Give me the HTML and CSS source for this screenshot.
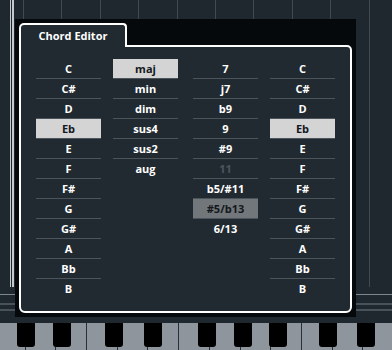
FILE: index.html
```html
<!DOCTYPE html>
<html lang="en">
<head>
  <meta charset="UTF-8">
  <meta name="viewport" content="width=device-width, initial-scale=1.0">
  <title>Chord Editor</title>
  <link rel="stylesheet" href="styles.css">
</head>
<body>
  <div class="stage">
    <div class="window">
      <div class="tab">Chord Editor</div>
      <div class="panel">
        <div class="col">
          <div class="row">C</div>
          <div class="row">C#</div>
          <div class="row">D</div>
          <div class="row selected">Eb</div>
          <div class="row">E</div>
          <div class="row">F</div>
          <div class="row">F#</div>
          <div class="row">G</div>
          <div class="row">G#</div>
          <div class="row">A</div>
          <div class="row">Bb</div>
          <div class="row">B</div>
        </div>
        <div class="col">
          <div class="row selected">maj</div>
          <div class="row">min</div>
          <div class="row">dim</div>
          <div class="row">sus4</div>
          <div class="row">sus2</div>
          <div class="row">aug</div>
        </div>
        <div class="col col-ext">
          <div class="row">7</div>
          <div class="row">j7</div>
          <div class="row">b9</div>
          <div class="row">9</div>
          <div class="row">#9</div>
          <div class="row disabled">11</div>
          <div class="row">b5/#11</div>
          <div class="row active">#5/b13</div>
          <div class="row">6/13</div>
        </div>
        <div class="col">
          <div class="row">C</div>
          <div class="row">C#</div>
          <div class="row">D</div>
          <div class="row selected">Eb</div>
          <div class="row">E</div>
          <div class="row">F</div>
          <div class="row">F#</div>
          <div class="row">G</div>
          <div class="row">G#</div>
          <div class="row">A</div>
          <div class="row">Bb</div>
          <div class="row">B</div>
        </div>
      </div>
    </div>
  </div>

  <!-- keyboard strip at the bottom -->
  <div class="keys">
    <div class="white"></div>
    <div class="white"></div>
    <div class="white"></div>
    <div class="white"></div>
    <div class="white"></div>
    <div class="white"></div>
    <div class="white"></div>
    <div class="white"></div>
    <div class="white"></div>
    <div class="white"></div>
    <div class="white"></div>
    <div class="white"></div>
    <div class="white"></div>
    <div class="black k1"></div>
    <div class="black k2"></div>
    <div class="black k3"></div>
    <div class="black k4"></div>
    <div class="black k5"></div>
    <div class="black k6"></div>
    <div class="black k7"></div>
    <div class="black k8"></div>
    <div class="black k9"></div>
  </div>
</body>
</html>
```

FILE: styles.css
```css
body {
  margin: 0;
  padding: 0;
  width: 392px;
  height: 350px;
  overflow: hidden;
  background: #20282f;
  font-family: "Open Sans", Arial, sans-serif;
}

.stage {
  height: 323px;
  box-sizing: border-box;
  padding: 19px 0 0 15px;
  background:
    linear-gradient(to right, transparent 10px, #c4c9ce 10px, #c4c9ce 11px, transparent 11px, transparent 12px, #c4c9ce 12px, #c4c9ce 14px, transparent 14px) 0 0 / 100% 287px no-repeat,
    repeating-linear-gradient(to right, transparent 0px, transparent 23px, #414a52 23px, #414a52 24px, transparent 24px, transparent 38.4px) 0 0 / 100% 287px no-repeat,
    linear-gradient(to bottom, transparent 294px, #7f878e 294px, #7f878e 295px, transparent 295px, transparent 303px, #4a5259 303px, #4a5259 305px, transparent 305px, transparent 309px, #4a5259 309px, #4a5259 311px, transparent 311px);
}

.window {
  width: 341px;
  height: 298px;
  box-sizing: border-box;
  padding: 4px;
  background: #05090c;
}

.tab {
  position: relative;
  z-index: 1;
  width: 108px;
  height: 24px;
  box-sizing: border-box;
  margin-bottom: -2px;
  border: 2px solid #fff;
  border-bottom: none;
  border-radius: 5px 4px 0 0;
  background: #222a31;
  color: #fff;
  font-size: 11px;
  font-weight: 700;
  line-height: 21px;
  text-align: center;
}

.panel {
  display: flex;
  gap: 12px;
  height: 268px;
  box-sizing: border-box;
  padding: 12px 0 0 15px;
  border: 2px solid #fff;
  border-radius: 0 5px 6px 6px;
  background: #222a31;
}

.col {
  width: 65px;
}

.col-ext {
  margin-left: 3px;
}

.row {
  height: 19px;
  line-height: 19px;
  border-bottom: 1px solid #4b545b;
  color: #fff;
  font-size: 11px;
  font-weight: 700;
  text-align: center;
}

.row:last-child {
  border-bottom: none;
}

.row.selected {
  background: #d4d4d4;
  color: #151a1e;
}

.row.active {
  background: #72777c;
  color: #14181b;
}

.row.disabled {
  color: #4a5560;
}

.keys {
  position: relative;
  display: flex;
  height: 27px;
  margin-left: -5px;
}

.white {
  flex: 0 0 30.7px;
  box-sizing: border-box;
  border-right: 1px solid #273036;
  background: #8e959c;
}

.black {
  position: absolute;
  top: 0;
  width: 18px;
  height: 24px;
  background: #000;
  border-radius: 0 0 3px 3px;
}

.k1 { left: 22px; }
.k2 { left: 58px; }
.k3 { left: 110px; }
.k4 { left: 149px; }
.k5 { left: 203px; }
.k6 { left: 239px; }
.k7 { left: 274px; }
.k8 { left: 324px; }
.k9 { left: 362px; }
```
